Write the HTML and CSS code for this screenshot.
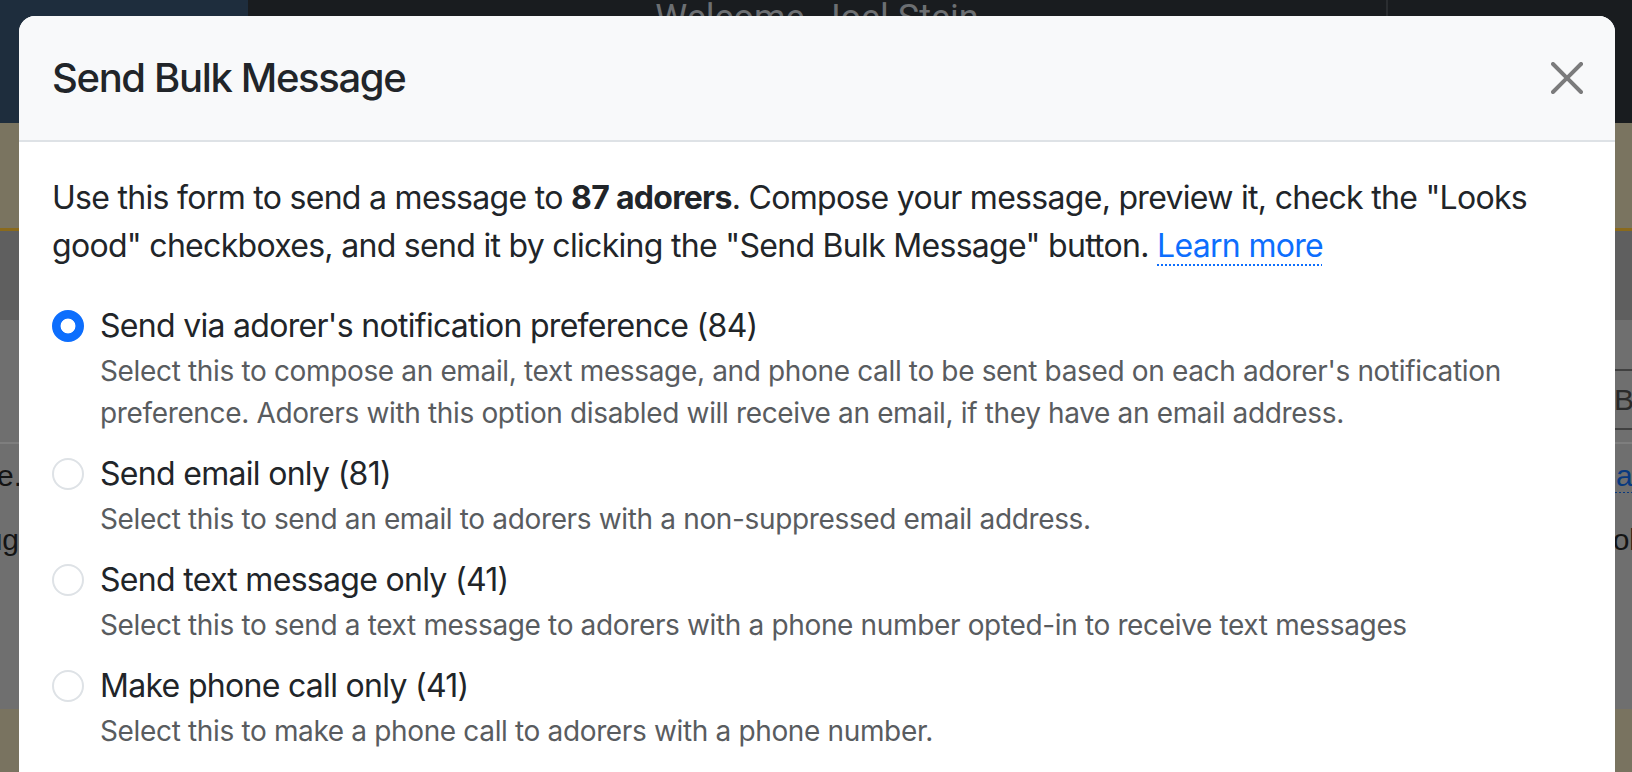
FILE: index.html
```html
<!DOCTYPE html>
<html lang="en">
<head>
<meta charset="utf-8">
<title>Send Bulk Message</title>
<link rel="stylesheet" href="styles.css">
</head>
<body>
<div class="page">
  <header class="nav">
    <div class="brand"></div>
    <div class="nav-main"><span class="welcome">Welcome, Joel Stein</span></div>
    <div class="nav-right"></div>
  </header>
  <div class="band-khaki"></div>
  <div class="gold"></div>
  <div class="subnav"></div>
  <main class="content">
    <div class="toolbar"><span class="tool-box">Bulk</span></div>
    <div class="sep"></div>
    <div class="row"><span class="l">Done.</span><span class="r r1"><span class="bg-link">Clear</span></span></div>
    <div class="row"><span class="l l2">Debug</span><span class="r r2">Tools</span></div>
  </main>
  <div class="footer"></div>
</div>

<div class="modal" role="dialog" aria-labelledby="modal-title">
  <div class="modal-header">
    <h5 class="modal-title" id="modal-title">Send Bulk Message</h5>
    <button class="btn-close" type="button" aria-label="Close">
      <svg viewBox="0 0 16 16" width="32" height="32"><path d="M.293.293a1 1 0 0 1 1.414 0L8 6.586 14.293.293a1 1 0 1 1 1.414 1.414L9.414 8l6.293 6.293a1 1 0 0 1-1.414 1.414L8 9.414l-6.293 6.293a1 1 0 0 1-1.414-1.414L6.586 8 .293 1.707a1 1 0 0 1 0-1.414z"/></svg>
    </button>
  </div>
  <div class="modal-body">
    <p class="intro">Use this form to send a message to <strong>87 adorers</strong>. Compose your message, preview it, check the "Looks good" checkboxes, and send it by clicking the "Send Bulk Message" button. <a href="#" class="learn">Learn more</a></p>

    <div class="form-check">
      <input class="radio" type="radio" name="mode" id="m1" checked>
      <label for="m1" class="check-label">Send via adorer's notification preference (84)</label>
      <div class="form-text">Select this to compose an email, text message, and phone call to be sent based on each adorer's notification preference. Adorers with this option disabled will receive an email, if they have an email address.</div>
    </div>
    <div class="form-check">
      <input class="radio" type="radio" name="mode" id="m2">
      <label for="m2" class="check-label">Send email only (81)</label>
      <div class="form-text">Select this to send an email to adorers with a non-suppressed email address.</div>
    </div>
    <div class="form-check">
      <input class="radio" type="radio" name="mode" id="m3">
      <label for="m3" class="check-label">Send text message only (41)</label>
      <div class="form-text">Select this to send a text message to adorers with a phone number opted-in to receive text messages</div>
    </div>
    <div class="form-check">
      <input class="radio" type="radio" name="mode" id="m4">
      <label for="m4" class="check-label">Make phone call only (41)</label>
      <div class="form-text">Select this to make a phone call to adorers with a phone number.</div>
    </div>
  </div>
</div>
</body>
</html>
```

FILE: styles.css
```css
* { box-sizing: border-box; }

html, body {
  margin: 0;
  padding: 0;
}

body {
  width: 1632px;
  height: 772px;
  overflow: hidden;
  position: relative;
  background: #6f6f6f;
  font-family: Inter, "Liberation Sans", sans-serif;
}

/* ---------- page behind the backdrop (already dimmed colours) ---------- */
.page {
  display: flex;
  flex-direction: column;
  height: 772px;
}

.nav {
  flex: none;
  display: flex;
  height: 123px;
  background: #191c1f;
}

.brand {
  width: 248px;
  background: #1e2d3d;
}

.nav-main {
  flex: 1;
  text-align: center;
  border-right: 2px solid #2a2d30;
}

.welcome {
  font-family: Roboto, "Liberation Sans", sans-serif;
  font-size: 36px;
  line-height: 1;
  color: #6c6f72;
}

.nav-right {
  width: 244px;
}

.band-khaki {
  flex: none;
  height: 105px;
  background: #7a7460;
}

.gold {
  flex: none;
  height: 3px;
  background: #8a6a1c;
}

.subnav {
  flex: none;
  height: 89px;
  background: #5f5f5f;
}

.content {
  flex: 1;
  display: flex;
  flex-direction: column;
  background: #6f6f6f;
  font-family: "Liberation Sans", sans-serif;
  font-size: 30px;
  color: #141414;
}

.toolbar {
  margin-top: 49px;
  height: 61px;
  display: flex;
  justify-content: flex-end;
}

.tool-box {
  width: 32px;
  overflow: hidden;
  white-space: nowrap;
  padding-left: 14px;
  line-height: 57px;
  color: #2a2a2a;
  border-top: 2px solid #404040;
  border-bottom: 2px solid #404040;
}

.sep {
  margin-top: 12px;
  height: 2px;
  background: #7e7e7e;
}

.row {
  height: 64px;
  display: flex;
  justify-content: space-between;
  align-items: center;
  white-space: nowrap;
}

.row:first-of-type { margin-top: 19px; }

.l {
  width: 22px;
  display: flex;
  justify-content: flex-end;
  overflow: hidden;
}

.l2 { width: 19px; }

.r {
  overflow: hidden;
  white-space: nowrap;
}

.r1 { width: 61px; }
.r2 { width: 51px; }

.bg-link {
  color: #08397f;
  text-decoration: underline dotted;
  text-decoration-thickness: 2px;
  text-underline-offset: 6px;
}

.footer {
  flex: none;
  height: 63px;
  background: #797360;
}

/* ---------- modal (overlay) ---------- */
.modal {
  position: absolute;
  top: 16px;
  left: 19px;
  width: 1596px;
  height: 820px;
  background: #fff;
  border-radius: 16px;
  overflow: hidden;
  color: #212529;
}

.modal-header {
  display: flex;
  align-items: center;
  justify-content: space-between;
  padding: 32px 32px 32px 33px;
  background: #f8f9fa;
  border-bottom: 2px solid #dee2e6;
}

.modal-title {
  margin: 0;
  font-size: 40px;
  line-height: 60px;
  font-weight: 500;
  letter-spacing: -1.35px;
  color: #212529;
}

.btn-close {
  width: 32px;
  height: 32px;
  padding: 0;
  border: 0;
  background: transparent;
  opacity: 0.5;
  display: flex;
}

.btn-close svg { fill: #000; }

.modal-body {
  padding: 32px 32px 32px 33px;
}

.intro {
  margin: 0 0 32px;
  padding-right: 30px;
  font-size: 32px;
  line-height: 48px;
  letter-spacing: -0.7px;
}

.intro strong { font-weight: 700; }

.learn {
  color: #0d6efd;
  text-decoration: underline dotted;
  text-decoration-thickness: 2px;
  text-underline-offset: 7px;
}

.form-check {
  position: relative;
  padding-left: 48px;
  margin-bottom: 16px;
}

.radio {
  appearance: none;
  -webkit-appearance: none;
  float: left;
  width: 32px;
  height: 32px;
  margin: 8px 0 0 -48px;
  border: 2px solid #dee2e6;
  border-radius: 50%;
  background: #fff;
}

.radio:checked {
  border-color: #0d6efd;
  background: radial-gradient(circle, #fff 0 7px, #0d6efd 7.8px);
}

.check-label {
  display: block;
  font-size: 32px;
  line-height: 48px;
  letter-spacing: -0.7px;
  color: #212529;
}

.form-text {
  font-size: 28px;
  line-height: 42px;
  letter-spacing: -0.35px;
  color: #595c5f;
}
```
